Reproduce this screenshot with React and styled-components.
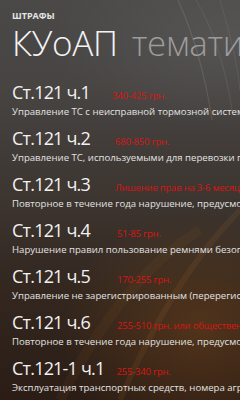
import styled, { createGlobalStyle } from 'styled-components';

const Global = createGlobalStyle`
  html, body { margin: 0; padding: 0; }
  body {
    width: 240px;
    height: 400px;
    overflow: hidden;
    background: #3a3430;
    font-family: "Open Sans", "Noto Sans", sans-serif;
  }
`;

const Screen = styled.main`
  position: relative;
  width: 240px;
  height: 400px;
  overflow: hidden;
  background:
    radial-gradient(ellipse 140px 120px at 200px 330px, rgba(120, 70, 25, 0.45), transparent),
    radial-gradient(ellipse 180px 90px at 230px 40px, rgba(110, 110, 110, 0.35), transparent),
    linear-gradient(180deg, #4a4948 0%, #474442 22%, #3d3631 48%, #33271f 72%, #2b1d15 100%);
`;

const Streaks = styled.svg`
  position: absolute;
  inset: 0;
  pointer-events: none;
`;

const Content = styled.div`
  position: relative;
  padding: 10px 0 0 12px;
  display: flex;
  flex-direction: column;
`;

const AppTitle = styled.div`
  font-size: 9px;
  line-height: 12px;
  font-weight: 700;
  color: #e4e4e4;
`;

const PageTitle = styled.h1`
  margin: 3px 0 0;
  font-size: 35px;
  line-height: 36px;
  font-weight: 300;
  letter-spacing: -0.3px;
  color: #f4f4f4;
  white-space: nowrap;
  span { color: #9c9c9c; margin-left: 14px; }
`;

const List = styled.div`
  margin-top: 20px;
  display: flex;
  flex-direction: column;
  gap: 9px;
`;

const Item = styled.div`
  display: flex;
  flex-direction: column;
  gap: 2px;
  white-space: nowrap;
`;

const Head = styled.div`
  display: flex;
  align-items: baseline;
  gap: ${p => p.$gap}px;
`;

const Code = styled.div`
  font-size: 18px;
  line-height: 22px;
  letter-spacing: -0.8px;
  color: #f2f2f2;
`;

const Fine = styled.div`
  font-size: 9.5px;
  letter-spacing: -0.2px;
  color: #d81515;
`;

const Desc = styled.div`
  font-size: 9.6px;
  line-height: 13px;
  color: #e2e2e2;
`;

const items = [
  ['Ст.121 ч.1', '340-425 грн.', 'Управление ТС с неисправной тормозной системой', 22],
  ['Ст.121 ч.2', '680-850 грн.', 'Управление ТС, используемыми для перевозки пассажиров', 25],
  ['Ст.121 ч.3', 'Лишение прав на 3-6 месяцев', 'Повторное в течение года нарушение, предусмотренное', 25],
  ['Ст.121 ч.4', '51-85 грн.', 'Нарушение правил пользование ремнями безопасности', 27],
  ['Ст.121 ч.5', '170-255 грн.', 'Управление не зарегистрированным (перерегистрированным)', 27],
  ['Ст.121 ч.6', '255-510 грн. или общественные работы', 'Повторное в течение года нарушение, предусмотренное', 27],
  ['Ст.121-1 ч.1', '255-340 грн.', 'Эксплуатация транспортных средств, номера агрегатов', 12],
];

export default function App() {
  return (
    <Screen>
      <Global />
      <Streaks width="240" height="400" viewBox="0 0 240 400">
        <path d="M178 0 C196 40 206 80 212 120" stroke="rgba(255,255,255,0.10)" strokeWidth="1.2" fill="none" />
        <path d="M196 0 C214 30 226 70 232 110" stroke="rgba(255,255,255,0.08)" strokeWidth="1" fill="none" />
        <path d="M220 0 C232 40 238 70 240 90" stroke="rgba(255,255,255,0.07)" strokeWidth="1" fill="none" />
        <path d="M120 400 C150 330 190 260 240 210" stroke="rgba(200,130,60,0.10)" strokeWidth="6" fill="none" />
        <path d="M60 400 C100 320 150 260 200 230" stroke="rgba(170,100,40,0.08)" strokeWidth="10" fill="none" />
      </Streaks>
      <Content>
        <AppTitle>ШТРАФЫ</AppTitle>
        <PageTitle>КУоАП<span>тематика</span></PageTitle>
        <List>
          {items.map(([code, fine, desc, gap]) => (
            <Item key={code}>
              <Head $gap={gap}>
                <Code>{code}</Code>
                <Fine>{fine}</Fine>
              </Head>
              <Desc>{desc}</Desc>
            </Item>
          ))}
        </List>
      </Content>
    </Screen>
  );
}
